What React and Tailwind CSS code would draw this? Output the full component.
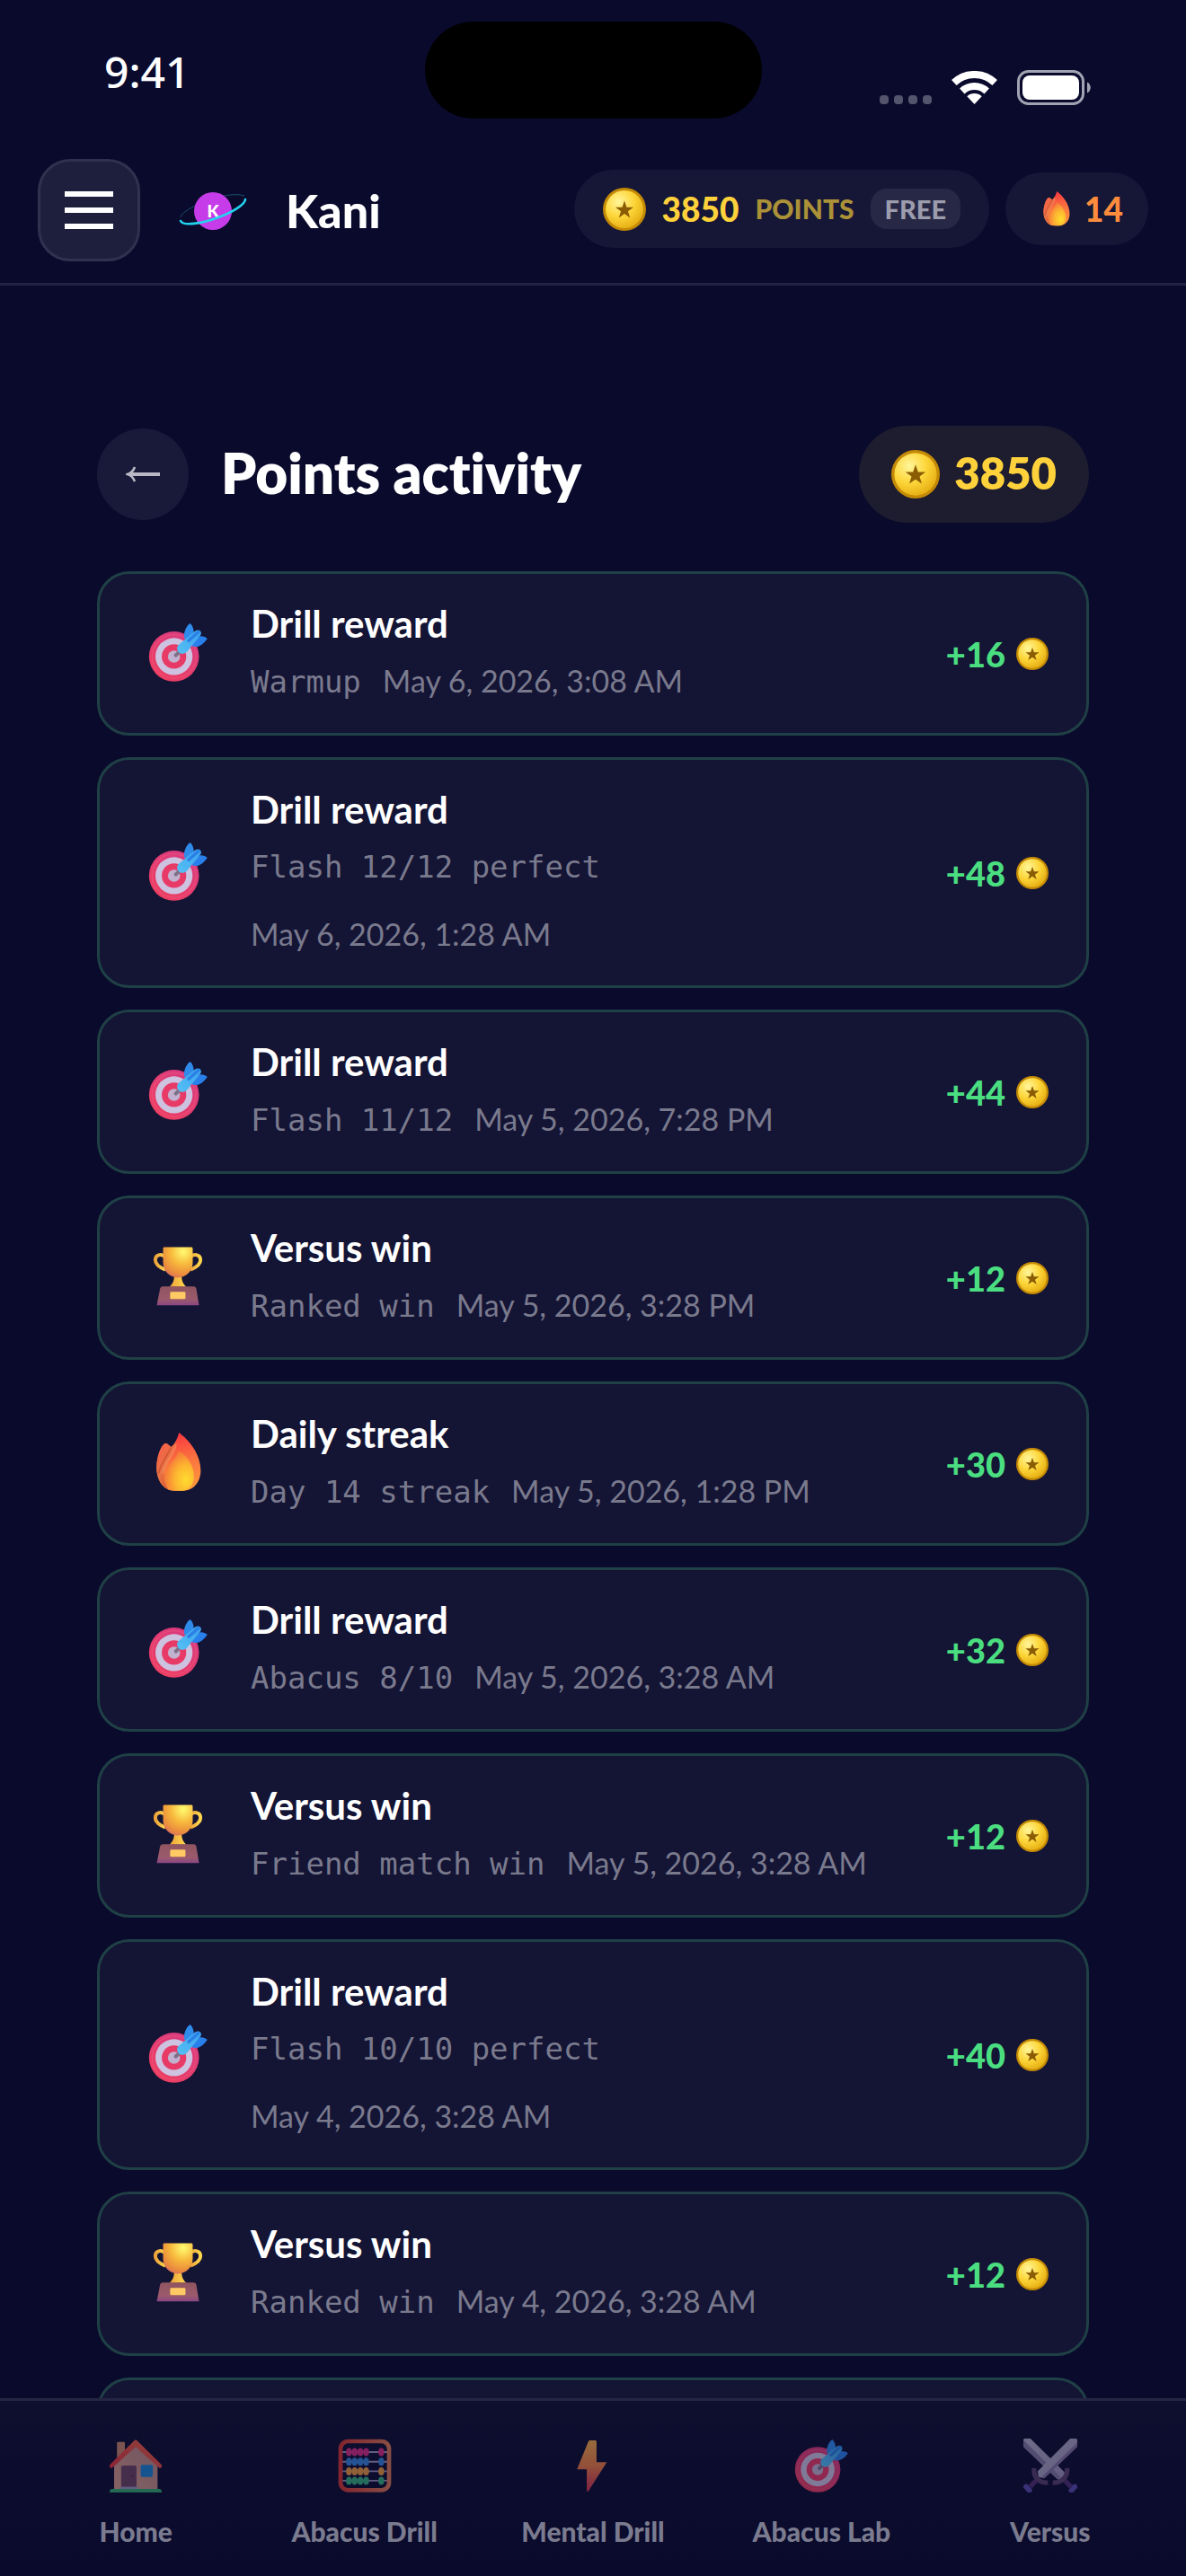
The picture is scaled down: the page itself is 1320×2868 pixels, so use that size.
import React from "react";

const ENTRIES = [
  { icon: "target", title: "Drill reward", note: "Warmup", date: "May 6, 2026, 3:08 AM", points: 16 },
  { icon: "target", title: "Drill reward", note: "Flash 12/12 perfect", date: "May 6, 2026, 1:28 AM", points: 48 },
  { icon: "target", title: "Drill reward", note: "Flash 11/12", date: "May 5, 2026, 7:28 PM", points: 44 },
  { icon: "trophy", title: "Versus win", note: "Ranked win", date: "May 5, 2026, 3:28 PM", points: 12 },
  { icon: "flame", title: "Daily streak", note: "Day 14 streak", date: "May 5, 2026, 1:28 PM", points: 30 },
  { icon: "target", title: "Drill reward", note: "Abacus 8/10", date: "May 5, 2026, 3:28 AM", points: 32 },
  { icon: "trophy", title: "Versus win", note: "Friend match win", date: "May 5, 2026, 3:28 AM", points: 12 },
  { icon: "target", title: "Drill reward", note: "Flash 10/10 perfect", date: "May 4, 2026, 3:28 AM", points: 40 },
  { icon: "trophy", title: "Versus win", note: "Ranked win", date: "May 4, 2026, 3:28 AM", points: 12 },
];

const TABS = [
  { icon: "house", label: "Home" },
  { icon: "abacus", label: "Abacus Drill" },
  { icon: "bolt", label: "Mental Drill" },
  { icon: "target", label: "Abacus Lab" },
  { icon: "swords", label: "Versus" },
];

/* Gradients shared by all the icons. */
function Gradients() {
  return (
    <svg width="0" height="0" className="absolute" aria-hidden="true">
      <defs>
        <radialGradient id="coin" cx="0.35" cy="0.3" r="0.8">
          <stop offset="0" stopColor="#fff59a" />
          <stop offset="0.5" stopColor="#fdd63a" />
          <stop offset="1" stopColor="#e2a80c" />
        </radialGradient>
        <linearGradient id="targetRed" x1="1" y1="0" x2="0.3" y2="1">
          <stop offset="0" stopColor="#d63a84" />
          <stop offset="1" stopColor="#ee3f62" />
        </linearGradient>
        <linearGradient id="dart" x1="1" y1="0" x2="0" y2="1">
          <stop offset="0" stopColor="#3aa0ee" />
          <stop offset="1" stopColor="#56c1f4" />
        </linearGradient>
        <radialGradient id="cup" cx="0.68" cy="0.15" r="0.95">
          <stop offset="0" stopColor="#fffb72" />
          <stop offset="0.45" stopColor="#f7b83c" />
          <stop offset="0.8" stopColor="#ea8b3e" />
          <stop offset="1" stopColor="#d9686a" />
        </radialGradient>
        <linearGradient id="handle" x1="0" y1="0" x2="1" y2="0">
          <stop offset="0" stopColor="#eda33a" />
          <stop offset="1" stopColor="#ffd84e" />
        </linearGradient>
        <linearGradient id="base" x1="0" y1="0" x2="0" y2="1">
          <stop offset="0" stopColor="#8f5560" />
          <stop offset="0.7" stopColor="#9b5a6c" />
          <stop offset="1" stopColor="#8a4684" />
        </linearGradient>
        <linearGradient id="fireOuter" x1="0.45" y1="0" x2="0.6" y2="1">
          <stop offset="0" stopColor="#f8363f" />
          <stop offset="0.5" stopColor="#fb7440" />
          <stop offset="1" stopColor="#ff9a3c" />
        </linearGradient>
        <linearGradient id="fireLeft" x1="0" y1="0" x2="0.5" y2="1">
          <stop offset="0" stopColor="#fb5d4a" />
          <stop offset="0.6" stopColor="#e87244" />
          <stop offset="1" stopColor="#dd5a35" />
        </linearGradient>
        <radialGradient id="fireInner" cx="0.72" cy="0.72" r="0.75">
          <stop offset="0" stopColor="#ffdb2e" />
          <stop offset="0.5" stopColor="#fdb431" />
          <stop offset="1" stopColor="#f5743a" />
        </radialGradient>
        <linearGradient id="roof" x1="0" y1="1" x2="1" y2="0">
          <stop offset="0" stopColor="#e0303c" />
          <stop offset="1" stopColor="#ec6a45" />
        </linearGradient>
        <linearGradient id="wall" x1="0" y1="1" x2="1" y2="0">
          <stop offset="0" stopColor="#d69a88" />
          <stop offset="1" stopColor="#b58784" />
        </linearGradient>
        <linearGradient id="frame" x1="0" y1="0" x2="1" y2="0">
          <stop offset="0" stopColor="#d2362f" />
          <stop offset="1" stopColor="#d97852" />
        </linearGradient>
        <linearGradient id="bolt" x1="0.5" y1="0" x2="0.5" y2="1">
          <stop offset="0" stopColor="#f3ab47" />
          <stop offset="0.5" stopColor="#ec7d42" />
          <stop offset="1" stopColor="#cc3152" />
        </linearGradient>
        <linearGradient id="blade" x1="0" y1="0" x2="1" y2="1">
          <stop offset="0" stopColor="#b0adc4" />
          <stop offset="1" stopColor="#9a90b4" />
        </linearGradient>
      </defs>
    </svg>
  );
}

const DRAWINGS = {
  target: (
    <>
      <circle cx="13.9" cy="18.4" r="13.5" fill="url(#targetRed)" />
      <circle cx="13.9" cy="18.4" r="11.8" fill="none" stroke="#f05a86" strokeWidth="0.6" opacity="0.5" />
      <circle cx="13.9" cy="18.4" r="10" fill="#cdc3e0" />
      <circle cx="13.9" cy="18.4" r="6.6" fill="#e83a67" />
      <circle cx="13.9" cy="18.4" r="3.3" fill="#c2b2cf" />
      <path d="M14.9 17.7 18 14.8" stroke="#7d7088" strokeWidth="2" strokeLinecap="round" />
      <path d="M19.4 8.5C19 5 20.5 2 22.6.5 23.8 1.6 24.4 3 24.6 5.2L21.6 9.4Z" fill="#2f8bea" />
      <path d="M24 13C27.5 13.6 30 11.5 31.9 8.7 30.6 7.7 29.4 7.3 27.8 7.5L23.4 10.4Z" fill="#2a80ea" />
      <path d="M16.2 12.2 25.3 4.6C26.4 3.9 27.2 4 28 4.5 28.8 5.4 28.7 6.3 28 7.2L21 15.6C19.6 17.2 17.6 17.3 16.4 16 15.3 14.9 15.3 13.2 16.2 12.2Z" fill="url(#dart)" />
      <path d="M21.8 9.8 27 5.2" stroke="#2a80e6" strokeWidth="1.7" strokeLinecap="round" />
    </>
  ),
  trophy: (
    <>
      <path d="M8.6 5.2C7 3.9 3.8 4 3.8 7.2 3.8 10 6.6 11.4 9.2 12.4" fill="none" stroke="url(#handle)" strokeWidth="1.9" />
      <path d="M23.2 5.2C24.8 3.9 28.2 4 28.2 7.2 28.2 10 25.4 11.4 22.8 12.4" fill="none" stroke="url(#handle)" strokeWidth="1.9" />
      <path d="M14 15.5H18C18 18.5 18.8 20 20.6 21.7H11.4C13.2 20 14 18.5 14 15.5Z" fill="url(#handle)" />
      <path d="M8.6.2H23.2C23.7.2 24 .5 24 1V8.6C24 13 20.5 16.7 16 16.7S8 13 8 8.6V1C8 .5 8.2.2 8.6.2Z" fill="url(#cup)" />
      <path d="M8 21.4H24.4C25.2 21.4 25.7 21.8 25.9 22.6L27.4 31.6H4.6L6.4 22.6C6.6 21.8 7.2 21.4 8 21.4Z" fill="url(#base)" />
      <rect x="11.8" y="24.4" width="8.3" height="3.9" rx="0.7" fill="#ffca63" />
    </>
  ),
  flame: (
    <>
      <path d="M16.6 0C22 4 28.3 11.5 28.3 20.5 28.3 27 24 31.4 19 31.4H14C8.5 31.4 4.5 26 4.5 19 4.5 12.5 7 7.2 8.7 6 9.8 5.3 10.8 6.2 12.3 7.8 14.5 6 15.8 3 16.6 0Z" fill="url(#fireOuter)" />
      <path d="M8.7 6C9.8 5.3 10.8 6.2 12.3 7.8 13.5 7 14.4 5.7 15 4.8 15.2 10 8.6 16 8.6 22.5 8.6 26 9.5 28.5 11 30.6 7 28.6 4.5 24.4 4.5 19 4.5 12.5 7 7.2 8.7 6Z" fill="url(#fireLeft)" />
      <path d="M12.2 8C11 11.5 7 15.5 5.6 22" fill="none" stroke="#c9502f" strokeWidth="0.9" opacity="0.7" />
      <path d="M15 6.5C14.4 11.5 8.8 15 7.8 22" fill="none" stroke="#f59a68" strokeWidth="0.8" opacity="0.6" />
      <path d="M17.1 10.2C21 12.6 24.7 18 24.7 23.5 24.7 28.4 21.8 31.4 18 31.4H15C11.5 31.4 8.9 28 8.9 23.4 8.9 18.5 15 15.4 15.6 11.4 15.8 10.2 16.5 9.8 17.1 10.2Z" fill="url(#fireInner)" />
    </>
  ),
  house: (
    <>
      <rect x="4.9" y="2" width="4.7" height="14" rx="0.5" fill="#c28468" />
      <path d="M16 3 29 15.5V30H3.2V15.5Z" fill="url(#wall)" />
      <path d="M16 .8C16.5.8 16.8 1 17.1 1.4L31.3 15.4C31.8 16.4 31.4 17.6 30.2 17.6L16 4.9 1.8 17.6C.6 17.6.2 16.4.7 15.4L14.9 1.4C15.2 1 15.5.8 16 .8Z" fill="url(#roof)" />
      <rect x="7.4" y="16" width="9.1" height="14" rx="1" fill="#6c4560" />
      <circle cx="14.1" cy="22.4" r="0.6" fill="#4c2c48" />
      <rect x="19" y="15.6" width="7.2" height="7.2" rx="0.9" fill="#1d84d0" />
      <rect x="6.8" y="28.6" width="10.4" height="1.4" fill="#9c93b6" />
      <path d="M2 29.8H30C31 29.8 31.5 30.8 31.5 32H.5C.5 30.8 1 29.8 2 29.8Z" fill="#34a86e" />
    </>
  ),
  abacus: (
    <>
      {[
        [8, "#d42d7e"],
        [13.7, "#3483d6"],
        [19.4, "#e8993d"],
        [25, "#36ae7c"],
      ].map(([y, color]) => (
        <g key={y} fill={color}>
          <path d={`M2.5 ${y}H29.5`} stroke="#9c93bb" strokeWidth="1" />
          {[6.6, 10, 13.4, 16.8, 25.8].map((x) => (
            <ellipse key={x} cx={x} cy={y} rx="1.75" ry="2.4" />
          ))}
        </g>
      ))}
      <rect x="1.6" y="1.6" width="28.8" height="29" rx="4.5" fill="none" stroke="url(#frame)" strokeWidth="2.5" />
    </>
  ),
  bolt: <path d="M14.2 1H17.4Q18.1 1 18.1 1.8V14H24.2L13.2 31.3Q12.3 31.8 12.3 30.8V18.3H6.5L13.3 1.6Q13.6 1 14.2 1Z" fill="url(#bolt)" />,
  swords: (
    <>
      <path d="M0 .8Q0 0 .8 0H4.2L25 20.5 22 24.6Q21 24.8 20 24L0 4.8Z" fill="url(#blade)" />
      <path d="M0 .8 22 22.8 20.6 24.4 0 4.8Z" fill="#8277a0" />
      <path d="M32 .8Q32 0 31.2 0H27.8L8.4 19.4 9 22.8 12.4 23.6 32 4.8Z" fill="url(#blade)" />
      <path d="M32 2.4 10.6 23.2 12.4 23.6 32 4.8Z" fill="#81739f" />
      <path d="M6.3 17.5C6 23 9 26.3 14.6 26.2" fill="none" stroke="#574069" strokeWidth="2.8" />
      <path d="M26 17.5C26.3 23 23 26.3 17.4 26.2" fill="none" stroke="#574069" strokeWidth="2.8" />
      <path d="M7.4 25 4 28.6M24.8 25 28.2 28.6" stroke="#4e2f70" strokeWidth="2.8" />
      <path d="M1.6 28.6 3.6 30.8M30.5 28.6 28.5 30.8" stroke="#5a4bac" strokeWidth="3.1" strokeLinecap="round" />
    </>
  ),
};

function Icon({ name, className }) {
  return (
    <svg viewBox="0 0 32 32" fill="none" className={className} aria-hidden="true">
      {DRAWINGS[name]}
    </svg>
  );
}

function Coin({ className }) {
  return (
    <svg viewBox="0 0 48 48" className={className} aria-hidden="true">
      <circle cx="24" cy="24" r="24" fill="#c48a06" />
      <circle cx="24" cy="24" r="21" fill="url(#coin)" />
      <path d="M24 14.5 26.5 21.7H34L28 26.2 30.2 33.4 24 29 17.8 33.4 20 26.2 14 21.7H21.5Z" fill="#8a5c04" />
    </svg>
  );
}

function StatusBar() {
  return (
    <div className="grid grid-cols-[1fr_375px_1fr] pt-6">
      <div className="flex h-[108px] items-start pl-[116px] pt-8 font-['Noto_Sans',sans-serif] text-[48px] font-medium leading-[48px]">
        9:41
      </div>
      <div className="h-[108px] rounded-full bg-black" />
      <div className="flex h-[108px] items-start justify-end pr-[106px] pt-[54px]">
        <div className="mt-7 flex gap-[6px]">
          {[0, 1, 2, 3].map((dot) => (
            <span key={dot} className="size-[10px] rounded-[4px] bg-[#54556c]" />
          ))}
        </div>
        <svg viewBox="0 0 51 37" fill="none" className="ml-[22px] mt-px w-[51px]" aria-hidden="true">
          <path d="M2.8 13A33 33 0 0 1 48.2 13M11.8 22.5A20 20 0 0 1 39.2 22.5" stroke="#fff" strokeWidth="8" />
          <path d="M25.5 37 17.3 28.3A12 12 0 0 1 33.7 28.3Z" fill="#fff" />
        </svg>
        <svg viewBox="0 0 82 39" fill="none" className="ml-[22px] w-[82px]" aria-hidden="true">
          <rect x="1.5" y="1.5" width="72" height="36" rx="11" stroke="#a2a3b2" strokeWidth="3" />
          <rect x="6" y="6" width="63" height="27" rx="8" fill="#fff" />
          <path d="M78 13.5C83 15.5 83 23.5 78 25.5Z" fill="#a2a3b2" />
        </svg>
      </div>
    </div>
  );
}

function Brand() {
  return (
    <a href="#home" className="ml-9 flex items-center gap-9">
      <svg viewBox="0 0 90 90" fill="none" className="size-[90px]" aria-hidden="true">
        <path d="M9 53C9 44 60 22 80 29" stroke="#17506a" strokeWidth="1" />
        <circle cx="45" cy="46" r="21" fill="#c63ce8" />
        <text x="45" y="53" textAnchor="middle" fontFamily="Lato, sans-serif" fontWeight="900" fontSize="19" fill="#fff">
          K
        </text>
        <path d="M9 57C12 63 33 60 51 53 68 47 81 38 81 33" stroke="#22d3ee" strokeWidth="2.6" strokeLinecap="round" />
      </svg>
      <span className="text-[52px] font-black leading-[60px]">Kani</span>
    </a>
  );
}

function TopBar() {
  return (
    <div className="flex items-center border-b-[3px] border-[#222342] px-[42px] pb-6 pt-[45px]">
      <button
        type="button"
        aria-label="Menu"
        className="flex size-[114px] flex-col items-center justify-center gap-3 rounded-[36px] border-[3px] border-[#30314f] bg-[#1e1f3d]"
      >
        <span className="h-[6px] w-[54px] bg-white" />
        <span className="h-[6px] w-[54px] bg-white" />
        <span className="h-[6px] w-[54px] bg-white" />
      </button>
      <Brand />
      <div className="ml-auto flex items-center gap-[18px] pb-[3px]">
        <div className="flex h-[87px] items-center rounded-full bg-[#161736] px-8 font-black">
          <Coin className="size-12" />
          <span className="ml-[18px] text-[37px] text-[#ffd23c]">3850</span>
          <span className="ml-[18px] text-[30px] text-[#ab9137]">POINTS</span>
          <span className="ml-[18px] rounded-[18px] bg-[#272846] px-4 text-[29px] leading-[45px] text-[#9c9cac]">FREE</span>
        </div>
        <div className="flex h-[81px] items-center gap-3 rounded-full bg-[#161736] pl-[37px] pr-7 font-black text-[#ff8b3d]">
          <Icon name="flame" className="size-[39px]" />
          <span className="text-[37px]">14</span>
        </div>
      </div>
    </div>
  );
}

function Entry({ icon, title, note, date, points }) {
  return (
    <li className="flex items-center rounded-[36px] border-[3px] border-[#1f4045] bg-[#141435] py-[30px] pl-[30px] pr-[42px]">
      <div className="flex w-[114px] shrink-0 justify-center pb-1">
        <Icon name={icon} className="size-[66px]" />
      </div>
      <div className="-mb-[3px] ml-6 min-w-0 max-w-[700px] flex-1">
        <h2 className="text-[42px] font-bold leading-[51px]">{title}</h2>
        <div className="mt-2 flex flex-wrap items-baseline gap-x-6 gap-y-[15px] leading-[60px] text-[#7a7a8d]">
          <span className="font-['DejaVu_Sans_Mono',monospace] text-[34px]">{note}</span>
          <time className="text-[34px]">{date}</time>
        </div>
      </div>
      <div className="ml-auto flex items-center gap-3">
        <span className="text-[38px] font-black leading-[50px] text-[#4ade80]">+{points}</span>
        <Coin className="size-9" />
      </div>
    </li>
  );
}

export default function App() {
  return (
    <div className="flex h-screen flex-col overflow-hidden bg-[#0a0a2d] font-['Lato',sans-serif] text-white">
      <Gradients />
      <header>
        <StatusBar />
        <TopBar />
      </header>
      <main className="min-h-0 flex-1 overflow-y-auto px-[108px] pt-[156px] [scrollbar-width:none]">
        <div className="mb-[54px] flex h-[108px] items-center">
          <button
            type="button"
            aria-label="Back"
            className="flex size-[102px] items-center justify-center rounded-full bg-[#191a39]"
          >
            <svg viewBox="0 0 38 18" fill="none" className="w-[38px]" aria-hidden="true">
              <path d="M38 9H3" stroke="#b9b9c6" strokeWidth="4" />
              <path d="M10 1C8.5 5 6 7.8 2 9 6 10.2 8.5 13 10 17" stroke="#b9b9c6" strokeWidth="2.6" />
            </svg>
          </button>
          <h1 className="ml-9 pb-1 text-[62px] font-extrabold leading-[72px] [font-variant-ligatures:none]">Points activity</h1>
          <div className="ml-auto flex h-[108px] items-center gap-4 rounded-full bg-[#1e1c2f] px-9">
            <Coin className="size-[54px]" />
            <span className="pb-1 text-[49px] font-extrabold leading-[60px] text-[#ffd23c]">3850</span>
          </div>
        </div>
        <ul className="flex flex-col gap-6">
          {ENTRIES.map((entry) => (
            <Entry key={entry.date + entry.note} {...entry} />
          ))}
          <li className="h-[183px] rounded-[36px] border-[3px] border-[#1f4045] bg-[#141435]" aria-hidden="true" />
        </ul>
      </main>
      <nav className="grid grid-cols-5 border-t-[3px] border-[#242543] bg-linear-to-b from-[#0e0e2f] to-[#0a0a2c] px-6 pb-7 pt-[42px]">
        {TABS.map(({ icon, label }) => (
          <a key={label} href={"#" + icon} className="flex flex-col items-center gap-[22px]">
            <Icon name={icon} className="size-[60px] opacity-60" />
            <span className="text-[30px] font-black leading-[43px] text-[#7b7b8f]">{label}</span>
          </a>
        ))}
      </nav>
    </div>
  );
}
